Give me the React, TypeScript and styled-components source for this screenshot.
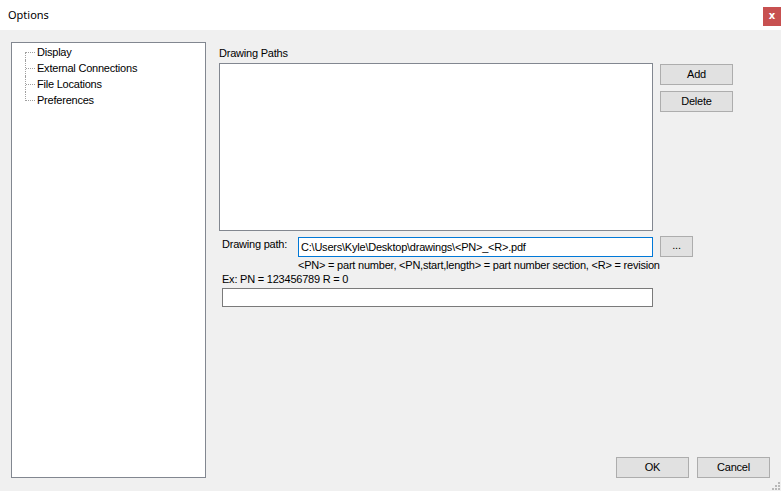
import React from "react";
import styled, { createGlobalStyle } from "styled-components";

const Global = createGlobalStyle`
  html, body { margin: 0; padding: 0; }
  body {
    width: 781px;
    height: 491px;
    overflow: hidden;
    background: #f0f0f0;
    font-family: "Liberation Sans", Arial, sans-serif;
    font-size: 11px;
    letter-spacing: -0.22px;
    color: #000;
  }
`;

const Window = styled.div`
  position: relative;
  width: 781px;
  height: 491px;
  display: flex;
  flex-direction: column;
  background: #f0f0f0;
`;

const TitleBar = styled.div`
  height: 30px;
  flex: none;
  background: #fff;
  display: flex;
  align-items: flex-start;
  justify-content: space-between;
`;

const Title = styled.div`
  font-family: "Noto Sans", "Open Sans", sans-serif;
  font-size: 11px;
  letter-spacing: 0;
  line-height: 16px;
  padding: 7px 0 0 8px;
  color: #000;
`;

const CloseButton = styled.div`
  margin-top: 7px;
  width: 18px;
  height: 19px;
  background: #c75050;
  color: #fff;
  font-family: "DejaVu Sans", sans-serif;
  font-weight: bold;
  font-size: 10px;
  letter-spacing: 0;
  line-height: 18px;
  text-align: center;
`;

const Body = styled.div`
  display: flex;
  padding: 12px 0 0 11px;
  gap: 13px;
`;

const TreeBox = styled.div`
  width: 195px;
  height: 436px;
  box-sizing: border-box;
  border: 1px solid #828790;
  background: #fff;
  padding: 1px 0 0 13px;
`;

const TreeItem = styled.div<{ $pos: "first" | "mid" | "last" }>`
  position: relative;
  height: 16px;
  line-height: 16px;
  padding-left: 12px;
  white-space: nowrap;
  &::before {
    content: "";
    position: absolute;
    left: 1px;
    top: 8px;
    width: 9px;
    border-top: 1px dotted #a0a0a0;
  }
  &::after {
    content: "";
    position: absolute;
    left: 0;
    top: ${(p) => (p.$pos === "first" ? "8px" : "0")};
    height: ${(p) => (p.$pos === "mid" ? "16px" : p.$pos === "first" ? "8px" : "9px")};
    border-left: 1px dotted #a0a0a0;
  }
`;

const RightCol = styled.div`
  width: 551px;
  height: 436px;
  display: flex;
  flex-direction: column;
`;

const SectionLabel = styled.div`
  margin-top: 5px;
  line-height: 13px;
  height: 13px;
`;

const ListRow = styled.div`
  display: flex;
  margin-top: 3px;
  gap: 7px;
  align-items: flex-start;
`;

const ListBox = styled.div`
  width: 434px;
  height: 168px;
  box-sizing: border-box;
  border: 1px solid #828790;
  background: #fff;
`;

const ButtonCol = styled.div`
  display: flex;
  flex-direction: column;
  gap: 6px;
  margin-top: 1px;
`;

const Button = styled.div<{ $w?: number }>`
  width: ${(p) => p.$w ?? 73}px;
  height: 21px;
  box-sizing: border-box;
  border: 1px solid #adadad;
  background: #e1e1e1;
  display: flex;
  align-items: center;
  justify-content: center;
  line-height: 13px;
`;

const PathRow = styled.div`
  display: flex;
  align-items: center;
  margin-top: 5px;
  height: 21px;
`;

const FieldLabel = styled.div`
  align-self: flex-start;
  margin-top: 2px;
  width: 76px;
  padding-left: 3px;
  line-height: 13px;
`;

const TextBox = styled.div<{ $focused?: boolean; $w: number; $h: number }>`
  width: ${(p) => p.$w}px;
  height: ${(p) => p.$h}px;
  box-sizing: border-box;
  border: 1px solid ${(p) => (p.$focused ? "#0078d7" : "#7a7a7a")};
  background: #fff;
  padding-left: 2px;
  line-height: ${(p) => p.$h - 2}px;
  white-space: nowrap;
  overflow: hidden;
`;

const BrowseButton = styled(Button)`
  margin-left: 7px;
  padding-bottom: 2px;
`;

const Hint = styled.div`
  padding-left: 79px;
  line-height: 13px;
  margin-top: 2px;
`;

const ExLabel = styled.div`
  padding-left: 3px;
  line-height: 13px;
  margin-top: 1px;
`;

const ExBox = styled.div`
  margin: 2px 0 0 3px;
`;

const Spacer = styled.div`
  flex: 1;
`;

const Footer = styled.div`
  display: flex;
  justify-content: flex-end;
  gap: 8px;
`;

const Grip = styled.svg`
  position: absolute;
  right: 1px;
  bottom: 1px;
`;

export default function App() {
  const items = ["Display", "External Connections", "File Locations", "Preferences"];
  return (
    <Window>
      <Global />
      <TitleBar>
        <Title>Options</Title>
        <CloseButton>x</CloseButton>
      </TitleBar>
      <Body>
        <TreeBox>
          {items.map((t, i) => (
            <TreeItem key={t} $pos={i === 0 ? "first" : i === items.length - 1 ? "last" : "mid"}>
              {t}
            </TreeItem>
          ))}
        </TreeBox>
        <RightCol>
          <SectionLabel>Drawing Paths</SectionLabel>
          <ListRow>
            <ListBox />
            <ButtonCol>
              <Button>Add</Button>
              <Button>Delete</Button>
            </ButtonCol>
          </ListRow>
          <PathRow>
            <FieldLabel>Drawing path:</FieldLabel>
            <TextBox $focused $w={355} $h={20}>
              {"C:\\Users\\Kyle\\Desktop\\drawings\\<PN>_<R>.pdf"}
            </TextBox>
            <BrowseButton $w={33}>...</BrowseButton>
          </PathRow>
          <Hint>{"<PN> = part number, <PN,start,length> = part number section, <R> = revision"}</Hint>
          <ExLabel>Ex: PN = 123456789 R = 0</ExLabel>
          <ExBox>
            <TextBox $w={431} $h={19} />
          </ExBox>
          <Spacer />
          <Footer>
            <Button>OK</Button>
            <Button>Cancel</Button>
          </Footer>
        </RightCol>
      </Body>
      <Grip width="8" height="8" viewBox="0 0 8 8">
        <rect x="6" y="0" width="2" height="2" fill="#b8b8b8" />
        <rect x="3" y="3" width="2" height="2" fill="#b8b8b8" />
        <rect x="6" y="3" width="2" height="2" fill="#b8b8b8" />
        <rect x="0" y="6" width="2" height="2" fill="#b8b8b8" />
        <rect x="3" y="6" width="2" height="2" fill="#b8b8b8" />
        <rect x="6" y="6" width="2" height="2" fill="#b8b8b8" />
      </Grip>
    </Window>
  );
}
